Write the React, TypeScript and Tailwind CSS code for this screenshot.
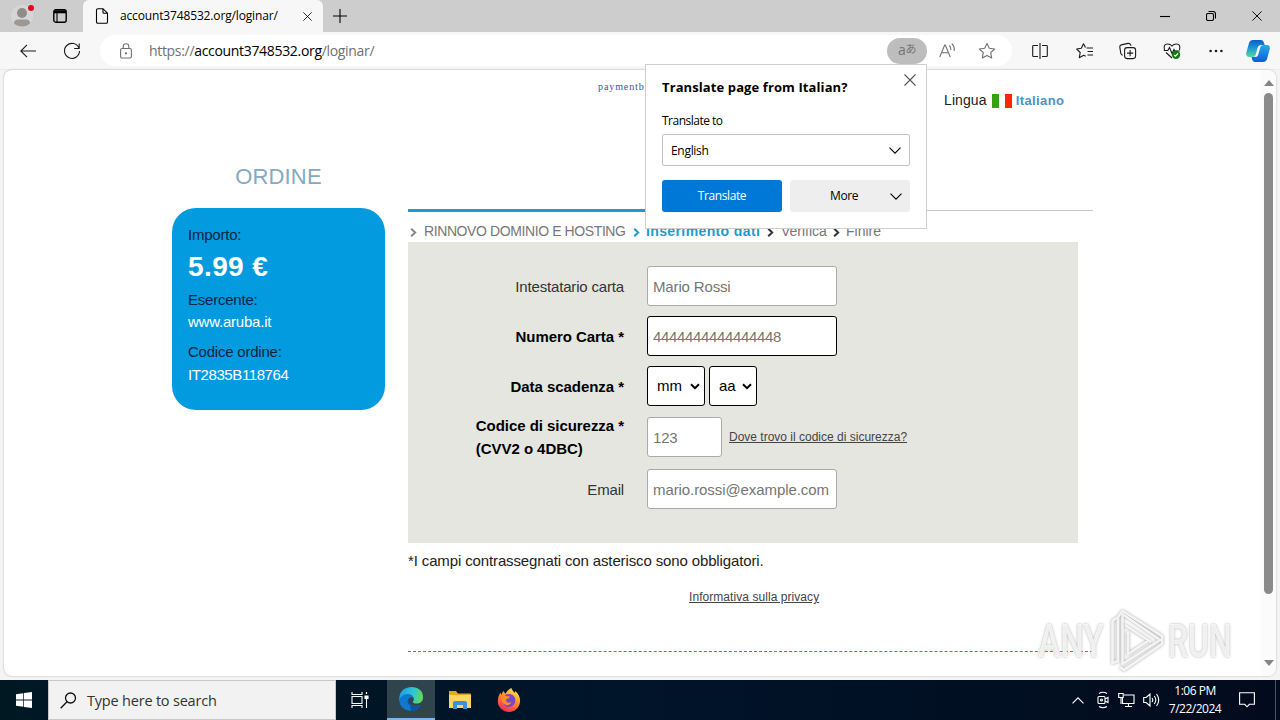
import type { ReactNode } from "react";
import clsx from "clsx";

const stroke = { fill: "none", stroke: "currentColor", strokeWidth: 1.1 };

const Chevron = ({ className }: { className?: string }) => (
  <svg viewBox="0 0 12 7" className={className} {...stroke}>
    <path d="M.5.7 6 6.2 11.5.7" />
  </svg>
);

const Cross = ({ className }: { className?: string }) => (
  <svg viewBox="0 0 12 12" className={className} {...stroke}>
    <path d="m.5.5 11 11M11.5.5l-11 11" />
  </svg>
);

const TabBar = () => (
  <div className="flex h-8 shrink-0 bg-[#cdcdcd]">
    <div className="flex w-[83px] items-center rounded-br-md">
      <svg viewBox="0 0 24 24" className="ml-[11px] size-6">
        <circle cx="11" cy="12" r="11" fill="#d6d6d6" />
        <circle cx="11" cy="9" r="5" fill="#8f8c8a" />
        <path d="M3 19.5q0-4 4-4h8q4 0 4 4-3 3-8 3t-8-3Z" fill="#9b9895" />
        <circle cx="20" cy="4" r="3" fill="#e00b1c" />
      </svg>
      <svg viewBox="0 0 14 14" className="ml-[18px] size-3.5 text-black" {...stroke}>
        <rect x=".8" y=".8" width="12.4" height="12.4" rx="2" strokeWidth="1.4" />
        <path d="M1 2.8h12" strokeWidth="3" />
        <path d="M4 3v10" />
      </svg>
    </div>
    <div className="flex w-60 items-center rounded-t-md bg-[#f7f7f7]">
      <svg viewBox="0 0 14 16" className="ml-3 h-4 w-3.5 text-black" {...stroke}>
        <path d="M3 .7h5l4.500 4.500V14q0 1.300-1.300 1.300H3Q1.500 15.300 1.500 14V2Q1.500.7 3 .7ZM8 1v3.200q0 1 1 1h3.500" />
      </svg>
      <span className="ml-[11px] w-[158px] whitespace-nowrap text-[12px] tracking-[-0.15px] text-black">
        account3748532.org/loginar/
      </span>
      <Cross className="ml-[25px] size-[9px] text-black" />
    </div>
    <svg viewBox="0 0 14 14" className="mt-[9px] ml-2.5 size-3.5 text-black" {...stroke}>
      <path d="M7 0v14M0 7h14" />
    </svg>
    <div className="ml-auto flex items-center gap-9 pr-[18px] text-black">
      <svg viewBox="0 0 10 10" className="size-2.5" {...stroke}>
        <path d="M0 5.500h10" />
      </svg>
      <svg viewBox="0 0 10 10" className="size-2.5" {...stroke}>
        <rect x=".5" y="2.500" width="7" height="7" rx="1.500" />
        <path d="M2.500.5h4.500q2.500 0 2.500 2.500v4.500" />
      </svg>
      <Cross className="size-2.5" />
    </div>
  </div>
);

const Toolbar = () => (
  <div className="flex h-[37px] shrink-0 items-center bg-[#f7f7f7] text-[#1b1b1b]">
    <svg viewBox="0 0 16 14" className="ml-5 h-3.5 w-4" {...stroke}>
      <path d="M16 7H.8M7 .8.8 7 7 13.200" />
    </svg>
    <svg viewBox="0 0 18 18" className="ml-[27px] size-[18px]" {...stroke}>
      <path d="M16 6.200A7.500 7.500 0 1 0 16.500 9M16.200 1.500v5h-5" />
    </svg>
    <div className="ml-[19px] flex h-[31px] w-[912px] items-center rounded-full bg-white pr-4 text-[#707070]">
      <svg viewBox="0 0 12 16" className="ml-5 h-4 w-3" {...stroke}>
        <rect x=".6" y="5.500" width="10.800" height="9.500" rx="1.500" />
        <path d="M3.200 5.500V3.500a2.800 2.800 0 0 1 5.600 0v2" />
        <circle cx="6" cy="10.300" r=".6" fill="currentColor" />
      </svg>
      <span className="ml-[17px] whitespace-nowrap text-[14px] tracking-[-0.32px]">
        https://<span className="text-black">account3748532.org</span>/loginar/
      </span>
      <div className="ml-auto flex h-[26px] w-10 items-center justify-center rounded-full bg-[#bdbdbd] pb-0.5 text-[14px] tracking-[-0.5px] text-[#747474]">
        a<span className="text-[11px]">あ</span>
      </div>
      <svg viewBox="0 0 17 16" className="ml-3 h-4 w-[17px]" {...stroke}>
        <path d="M.7 14 5.700 2h.6l5 12M2.500 9.800h7M10.200 2.500q2 1.800 1.700 4.500M12.800.7q3 2.800 2.400 7.200" />
      </svg>
      <svg viewBox="0 0 18 18" className="ml-[22px] size-[18px]" {...stroke}>
        <path d="m9 1.500 2.300 4.800 5.300.7-3.900 3.700 1 5.300L9 13.400 4.300 16l1-5.300L1.400 7l5.300-.7Z" strokeLinejoin="round" />
      </svg>
    </div>
    <svg viewBox="0 0 16 16" className="ml-5 size-4" {...stroke}>
      <path d="M8 0v16M6 2.500H1.500q-.8 0-.8.8v9.400q0 .8.8.8H6M10 2.500h4.500q.8 0 .8.8v9.400q0 .8-.8.8H10" />
    </svg>
    <svg viewBox="0 0 18 18" className="ml-7 size-[18px]" {...stroke}>
      <path d="M10.500 6H17M11.500 9.500H17M11.500 13H17M9.500 5.600 7.500 1.800 5.300 6.300l-4.600.7 3.500 3.500-.9 5.200 4.400-2.400 2 1" strokeLinejoin="round" />
    </svg>
    <svg viewBox="0 0 18 18" className="ml-[25px] size-[18px]" {...stroke}>
      <rect x="5.600" y="5.600" width="11" height="11" rx="2.500" />
      <path d="M11.100 8v6.200M8 11.100h6.200M3.800 13.200Q2.200 13 1.800 11.300L.8 5.200Q.6 3.400 2.300 2.900L9 1.400q2-.3 2.700 1.600l.3.8" />
    </svg>
    <svg viewBox="0 0 18 18" className="ml-[26px] size-[18px]" {...stroke}>
      <path d="M1.500 8Q0 2 4.500 2 7.500 2 9 4q1.500-2 4.500-2 4.500 0 3 6M.8 8.500h4l1.700-3 2.500 6 2-4 .8 1.500h5M3 10.500l6 5.500" />
      <circle cx="13" cy="12.700" r="4.200" fill="#107c10" stroke="none" />
      <path d="m11 12.900 1.400 1.300 2.600-2.700" stroke="white" />
    </svg>
    <svg viewBox="0 0 14 4" className="ml-7 h-1 w-3.5" fill="currentColor">
      <circle cx="1.600" cy="2" r="1.300" />
      <circle cx="7" cy="2" r="1.300" />
      <circle cx="12.400" cy="2" r="1.300" />
    </svg>
    <svg viewBox="0 0 24 24" className="ml-[23px] size-6">
      <defs>
        <linearGradient id="cpLeft" x1="0" y1="0" x2="0" y2="1">
          <stop offset="0" stopColor="#0b5fc4" />
          <stop offset=".45" stopColor="#1c94d2" />
          <stop offset="1" stopColor="#55dba0" />
        </linearGradient>
        <linearGradient id="cpRight" x1="0" y1="0" x2="0" y2="1">
          <stop offset="0" stopColor="#2aa8ec" />
          <stop offset="1" stopColor="#075fd6" />
        </linearGradient>
      </defs>
      <path d="M7 1h8q2 0 2.700 2l1 3h-4q-2.300 0-3 2.500L9.600 16q-.6 2-2.800 2H3q-3.200 0-2.800-4L3 4q1-3 4-3Z" fill="url(#cpLeft)" />
      <path d="M17 23H9q-2 0-2.700-2l-.8-3h3.800q2.300 0 3-2.500L14.400 8q.6-2 2.800-2H21q3.200 0 2.800 4L21 20q-1 3-4 3Z" fill="url(#cpRight)" />
    </svg>
  </div>
);

const TranslatePopup = () => (
  <div className="absolute top-[64px] left-[645px] z-10 flex h-[165px] w-[282px] flex-col border border-[#cfcfcf] bg-white px-4 font-['Open_Sans','Noto_Sans',sans-serif] text-[12px] text-black">
    <div className="flex h-[45px] items-center justify-between">
      <b className="text-[13px] tracking-[0.1px] whitespace-nowrap">Translate page from Italian?</b>
      <Cross className="-mr-1.5 mb-4 size-3 text-[#555]" />
    </div>
    <span className="mt-px h-[23px] leading-[19px] tracking-[-0.5px]">Translate to</span>
    <div className="flex h-8 shrink-0 items-center justify-between rounded-xs border border-[#c4c4c4] px-2">
      <span className="pt-px tracking-[-0.3px]">English</span>
      <Chevron className="h-[7px] w-3" />
    </div>
    <div className="mt-3.5 flex gap-2">
      <button className="h-8 w-[120px] rounded-[3px] bg-[#0078d7] tracking-[-0.4px] text-white">Translate</button>
      <button className="flex h-8 w-[120px] items-center rounded-[3px] bg-[#eee] pr-2">
        <span className="ml-10 tracking-[-0.4px]">More</span>
        <Chevron className="ml-auto h-[7px] w-3" />
      </button>
    </div>
  </div>
);

const OrderCard = () => (
  <div className="w-[213px]">
    <h2 className="mt-[92px] h-[46px] text-center text-[22px] leading-[30px] tracking-[0.15px] text-[#86a9c0]">ORDINE</h2>
    <div className="h-[202px] rounded-[24px] bg-[#029be0] px-4 pt-4 text-[15px] tracking-[-0.22px] text-[#0c2340]">
      <p className="h-[26px] leading-[22px]">Importo:</p>
      <p className="h-[39px] text-[28px] leading-[34px] font-bold tracking-[0.4px] text-white">5.99 €</p>
      <p className="h-[22px] leading-[22px]">Esercente:</p>
      <p className="h-[30px] leading-[22px] text-white">www.aruba.it</p>
      <p className="h-[23px] leading-[22px]">Codice ordine:</p>
      <p className="leading-[22px] tracking-[-0.4px] text-white">IT2835B118764</p>
    </div>
  </div>
);

const Arrow = ({ className }: { className: string }) => (
  <svg viewBox="0 0 7 9" className={clsx("mt-[3px] h-[9px] w-[7px] shrink-0", className)} fill="none" stroke="currentColor" strokeWidth="2">
    <path d="M1.200.7 5.200 4.500 1.200 8.300" />
  </svg>
);

const Field = ({ label, bold, className, children }: { label: ReactNode; bold?: boolean; className?: string; children: ReactNode }) => (
  <div className={clsx("flex items-center", className)}>
    <label className={clsx("flex w-[216px] justify-end text-[15px] leading-[23px]", bold ? "font-bold tracking-[-0.05px] text-black" : "tracking-[-0.17px] text-[#333]")}>
      <span>{label}</span>
    </label>
    <div className="ml-[23px] flex items-center gap-1">{children}</div>
  </div>
);

const Input = ({ placeholder, className }: { placeholder: string; className: string }) => (
  <input
    placeholder={placeholder}
    className={clsx("h-10 rounded-[3px] border bg-white px-[5px] text-[15px] placeholder:text-[#757575]", className)}
  />
);

const Select = ({ value, className }: { value: string; className: string }) => (
  <div className={clsx("flex h-10 items-center justify-between rounded-[3px] border border-black bg-white pr-1 pl-[9px] text-[15px] text-black", className)}>
    {value}
    <svg viewBox="0 0 10 7" className="h-[7px] w-2.5" fill="none" stroke="currentColor" strokeWidth="2">
      <path d="m1 1.200 4 4 4-4" />
    </svg>
  </div>
);

const PaymentForm = () => (
  <div className="ml-[23px] w-[685px]">
    <div className="flex h-[141px] items-start border-b border-[#c6c6c6] text-[14px]">
      <span className="mt-[9px] ml-[190px] w-[346px] font-['Liberation_Serif',serif] text-[10px] tracking-[0.9px] text-[#36539c]">paymentb</span>
      <span className="mt-5 tracking-[0.1px] text-[#222]">Lingua</span>
      <span className="mt-6 ml-[5px] flex h-3.5 w-5 bg-white">
        <span className="w-[7px] bg-[#35a310]" />
        <span className="ml-1.5 w-[7px] bg-[#ff2600]" />
      </span>
      <b className="mt-[21px] ml-1 text-[13px] tracking-[0.4px] text-[#4a93c9]">Italiano</b>
    </div>
    <div className="-mt-[2px] h-[3px] w-[300px] bg-[#1c9bd0]" />
    <div className="flex h-[30px] items-center pt-2 pl-0.5 text-[14px] whitespace-nowrap text-[#777]">
      <Arrow className="text-[#888]" />
      <span className="ml-[7px] w-[203px] tracking-[-0.4px]">RINNOVO DOMINIO E HOSTING</span>
      <Arrow className="ml-1.5 text-[#1c9bd0]" />
      <b className="ml-1.5 w-[115px] tracking-[0.38px] text-[#1c9bd0]">Inserimento dati</b>
      <Arrow className="ml-1.5 text-[#333]" />
      <span className="ml-[7px] w-[46px]">Verifica</span>
      <Arrow className="ml-1.5 text-[#333]" />
      <span className="ml-1.5">Finire</span>
    </div>
    <div className="h-[301px] w-[670px] bg-[#e5e6e0] pt-6">
      <Field label="Intestatario carta">
        <Input placeholder="Mario Rossi" className="w-[190px] border-[#aaa] tracking-[-0.15px]" />
      </Field>
      <Field label="Numero Carta *" bold className="mt-2.5">
        <Input placeholder="4444444444444448" className="w-[190px] border-black tracking-[-0.35px]" />
      </Field>
      <Field label="Data scadenza *" bold className="mt-2.5">
        <Select value="mm" className="w-[58px]" />
        <Select value="aa" className="w-12" />
      </Field>
      <Field label={<>Codice di sicurezza *<br />(CVV2 o 4DBC)</>} bold className="mt-[8px]">
        <Input placeholder="123" className="w-[75px] border-[#aaa] tracking-[-0.2px]" />
        <a className="ml-[3px] text-[12px] text-[#444] underline">Dove trovo il codice di sicurezza?</a>
      </Field>
      <Field label="Email" className="mt-[9px]">
        <Input placeholder="mario.rossi@example.com" className="w-[190px] border-[#aaa] tracking-[-0.08px]" />
      </Field>
    </div>
    <p className="mt-2 text-[15px] leading-5 tracking-[-0.13px] whitespace-nowrap text-[#222]">*I campi contrassegnati con asterisco sono obbligatori.</p>
    <p className="mt-4 ml-[281px] text-[12px] leading-5 tracking-[0.06px] text-[#444]">
      <a className="underline">Informativa sulla privacy</a>
    </p>
    <div className="mt-11 border-t border-dashed border-[#1c8fc0]" />
  </div>
);

const Watermark = () => (
  <div className="absolute top-[608px] left-[1038px] z-10 flex h-[66px] items-center font-['Roboto',sans-serif] text-[47px] font-medium text-white/80 [text-shadow:0_0_3px_#aaa]">
    <span className="w-[72px] origin-left scale-x-[0.71]">ANY</span>
    <svg viewBox="0 0 56 66" className="h-[66px] w-14 drop-shadow-[0_0_1.5px_#999]" fill="none" stroke="#fafafa" strokeOpacity=".9" strokeWidth="3.5" strokeLinejoin="round">
      <path d="M8 9 2.500 13v42L8 53V9l4.500-6L52 28v8L14 62l-4-3" strokeWidth="2.500" />
      <path d="M12.500 6v50L50 32ZM15 17l26 17M18 24v22l20-13" strokeWidth="2.500" />
    </svg>
    <span className="ml-0.5 origin-left scale-x-[0.68]">RUN</span>
  </div>
);

const Page = () => (
  <div className="flex min-h-0 flex-1 bg-[#f4f4f4] px-1 pb-1">
    <div className="flex flex-1 overflow-hidden rounded-lg bg-white shadow-[0_0_2px_#aaa]">
      <main className="flex flex-1 pl-[168px] font-['Liberation_Sans',Arial,sans-serif]">
        <OrderCard />
        <PaymentForm />
      </main>
      <div className="flex w-[15px] flex-col items-center bg-[#fbfbfb] pt-2.5 pb-4 text-[#858585]">
        <svg viewBox="0 0 10 6" className="h-1.5 w-2.5" fill="currentColor"><path d="M5 0 10 6H0Z" /></svg>
        <div className="mt-[7px] h-[501px] w-[9px] rounded-full bg-[#8a8a8a]" />
        <svg viewBox="0 0 10 6" className="mt-auto -mb-1.5 h-1.5 w-2.5" fill="currentColor"><path d="M5 6 10 0H0Z" /></svg>
      </div>
    </div>
  </div>
);

const Taskbar = () => (
  <div className="flex h-10 shrink-0 bg-linear-to-r from-[#001822] via-[#00142a] to-[#020b1c] text-white">
    <div className="flex w-12 items-center justify-center">
      <svg viewBox="0 0 16 16" className="size-4" fill="white">
        <path d="M0 2.300 7.300 1.200v6.400H0ZM8 1.100 16 0v7.600H8ZM0 8.400h7.300v6.400L0 13.700ZM8 8.400h8V16l-8-1.100Z" />
      </svg>
    </div>
    <div className="flex w-72 items-center border border-[#c8c8c8] bg-[#f2f2f2] text-[#333]">
      <svg viewBox="0 0 17 17" className="ml-[11px] size-[17px] text-[#111]" {...stroke}>
        <circle cx="10.500" cy="6" r="5" strokeWidth="1.300" />
        <path d="M7 9.700.7 16.200" strokeWidth="1.300" />
      </svg>
      <span className="ml-2.5 pt-0.5 text-[14.5px] tracking-[-0.2px]">Type here to search</span>
    </div>
    <div className="flex w-[51px] items-center justify-center pr-[3px]">
      <svg viewBox="0 0 18 18" className="size-[18px]" {...stroke}>
        <path d="M1 1v2.500h10V1M1 17v-2.500h10V17M1 5.500h10v7H1ZM15.500 1v2M15.500 8v9" />
        <path d="M14 5h3v2.500h-3Z" fill="white" />
      </svg>
    </div>
    <div className="flex w-12 items-center justify-center border-b-2 border-[#76b9ed] bg-[#30444e]">
      <svg viewBox="0 0 24 24" className="size-6">
        <defs>
          <linearGradient id="edgeTop" x1="0" y1=".3" x2="1" y2=".5">
            <stop offset="0" stopColor="#1d9de2" />
            <stop offset=".55" stopColor="#2fc4d8" />
            <stop offset="1" stopColor="#62d957" />
          </linearGradient>
        </defs>
        <path d="M12 0q12 .5 12 10.500c0 4-3 6-6.500 6-3 0-4-1-3.500-2 2-3 0-6-4-6Q3 8.500.2 14-.5 1 12 0Z" fill="url(#edgeTop)" />
        <path d="M.2 13.500Q2 6.500 9.500 7q4.500.5 5 4-2.500-1.500-4.500.5c-3 4 2 10 11.500 6.500Q18 24 12 24 1.500 23.500.2 13.500Z" fill="#1178cf" />
        <path d="M9.500 11.800C6 17 13 21.500 21.500 18 18 24 12 24 12 24 5 22 5 15q.5-4 4.500-3.200Z" fill="#0b559f" />
      </svg>
    </div>
    <div className="flex w-[49px] items-center justify-center">
      <svg viewBox="0 0 22 18" className="ml-px h-[18px] w-[22px]">
        <path d="M0 0h7l2 2.500h12q1 0 1 1V17H0Z" fill="#e5a91c" />
        <path d="M0 4h22v13H0Z" fill="#ffd563" />
        <path d="M4 18v-6q0-2 2-2h10q2 0 2 2v6h-4v-4H8v4Z" fill="#3f92d2" />
      </svg>
    </div>
    <div className="flex w-[49px] items-center justify-center">
      <svg viewBox="0 0 24 24" className="size-6">
        <defs>
          <linearGradient id="fox" x1=".8" y1="0" x2=".3" y2="1">
            <stop offset="0" stopColor="#fff04a" />
            <stop offset=".45" stopColor="#ff9326" />
            <stop offset="1" stopColor="#f5255a" />
          </linearGradient>
        </defs>
        <path d="M14.500 0c0 2 2 3 3.200 5 .4-1 .3-2 .3-2 4 3 5.500 7 5 11-.7 6-5.500 10-11 10S.8 19.500.8 13.500c0-4 1.200-7 2.800-9l.6 2.500 2-4 2.300 2.800Q10.500 1.500 14.500 0Z" fill="url(#fox)" />
        <path d="M8.500 6.500q7-2 9.500 3.500c1.500 5-2 9-6 9s-6-3-5.500-6q2 1.500 4 .5l-3-2Z" fill="#7548c6" />
        <path d="M4 8q2-2 5 0l4 .5q-.5 2-3.500 2.500l-1 2q2 3 6 1-1.500 4-5.500 3Q4 15 4 8Z" fill="#ff8d25" />
      </svg>
    </div>
    <div className="ml-auto flex items-center pr-[25px]">
      <Chevron className="h-[7px] w-3 rotate-180" />
      <svg viewBox="0 0 14 18" className="ml-3 h-[18px] w-3.5" {...stroke}>
        <rect x="2" y="5.500" width="7" height="7" rx="1" />
        <path d="m9 8 3-1.500v5L9 10M3 2.500q4-2.500 8 0M3 15.500q4 2.500 8 0" />
        <circle cx="5.500" cy="9" r="1" />
      </svg>
      <svg viewBox="0 0 17 16" className="ml-2 h-4 w-[17px]" {...stroke}>
        <path d="M6 3h10v8.500H4.500V6M10.500 11.500V15M7 14.500h7M.7 1.500h4.500v4H.7ZM3 5.500V12" />
      </svg>
      <svg viewBox="0 0 17 16" className="ml-2 h-4 w-[17px]" {...stroke}>
        <path d="M.7 5.500h2.500L7 2v12l-3.800-3.500H.7ZM9 6q1.500 2 0 4M11.300 4q3 4 0 8M13.500 2q4.500 6 0 12" />
      </svg>
      <div className="ml-2 w-[54px] text-center text-[12px] leading-[18px] tracking-[-0.5px] whitespace-nowrap">
        1:06 PM<br />7/22/2024
      </div>
      <svg viewBox="0 0 16 16" className="ml-[17px] size-4" {...stroke}>
        <path d="M.6.8h14.800v11.500h-5L8 14.800l-2.300-2.500H.6Z" />
      </svg>
    </div>
    <div className="-ml-[5px] w-[5px] border-l border-[#4b5563]" />
  </div>
);

const App = () => {
  return (
    <div className="relative flex h-[720px] w-[1280px] flex-col overflow-hidden bg-[#f7f7f7] font-['Open_Sans','Noto_Sans','Noto_Sans_CJK_JP',sans-serif]">
      <TabBar />
      <Toolbar />
      <div className="h-px shrink-0 bg-[#ececec]" />
      <Page />
      <Taskbar />
      <TranslatePopup />
      <Watermark />
    </div>
  );
};

export default App;
